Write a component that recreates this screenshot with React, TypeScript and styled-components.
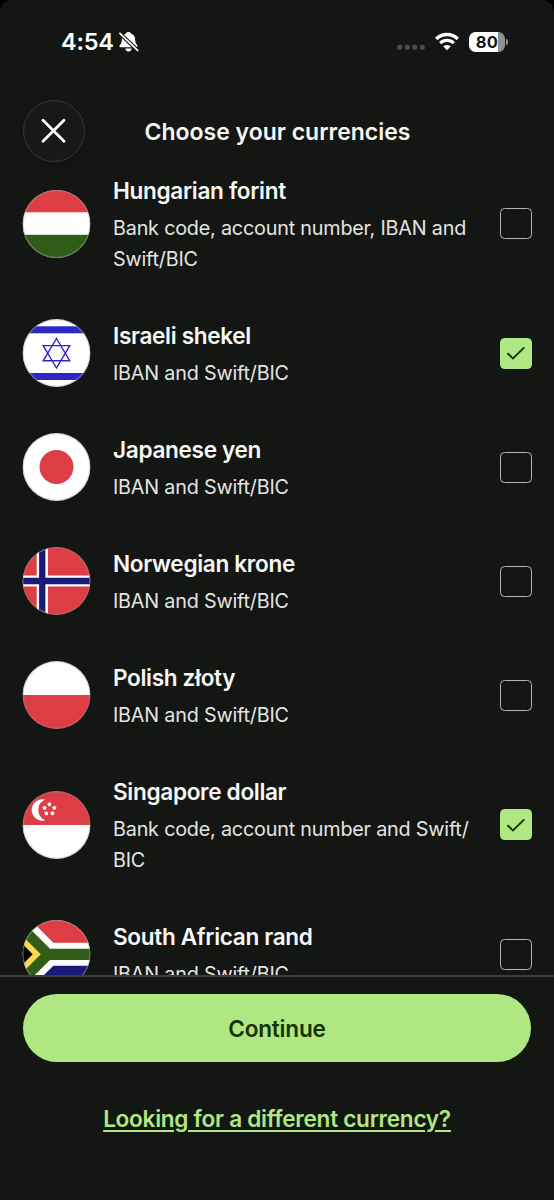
import React, { useState } from "react";
import styled, { createGlobalStyle } from "styled-components";

const GlobalStyle = createGlobalStyle`
  * { box-sizing: border-box; }
  body { margin: 0; background: #000; }
  button { font: inherit; border: 0; padding: 0; cursor: pointer; }
`;

const Screen = styled.main`
  width: 554px;
  height: 1200px;
  display: flex;
  flex-direction: column;
  overflow: hidden;
  border-radius: 12px 12px 0 0;
  background: #141613;
  color: #f6f7f5;
  font-family: Inter, "Liberation Sans", sans-serif;
`;

const StatusBar = styled.div`
  height: 83px;
  flex: none;
  display: flex;
  align-items: center;
  justify-content: space-between;
  padding: 0 46px 0 61px;
`;

const StatusGroup = styled.div<{ $gap: number }>`
  display: flex;
  align-items: center;
  gap: ${(p) => p.$gap}px;
`;

const Time = styled.span`
  width: 53px;
  font-size: 23.5px;
  font-weight: 600;
  line-height: 30px;
  letter-spacing: -0.2px;
  color: #fff;
`;

const Battery = styled.div`
  display: flex;
  align-items: center;
  gap: 1px;
`;

const BatteryBody = styled.div`
  width: 36px;
  height: 20px;
  border-radius: 6.5px;
  background: linear-gradient(90deg, #fff 29px, #8f908e 29px);
  color: #141613;
  font-size: 16.5px;
  font-weight: 700;
  line-height: 20px;
  text-align: center;
  letter-spacing: 0.2px;
`;

const BatteryTip = styled.div`
  width: 2px;
  height: 6px;
  border-radius: 0 2px 2px 0;
  background: #8f908e;
`;

const Header = styled.header`
  height: 87px;
  flex: none;
  display: grid;
  grid-template-columns: 62px 1fr 62px;
  align-items: start;
  padding: 17px 23px 0;
`;

const CloseButton = styled.button`
  width: 62px;
  height: 62px;
  display: grid;
  place-items: center;
  border: 1.3px solid #353735;
  border-radius: 50%;
  background: #181917;
  box-shadow: 0 3px 12px rgba(0, 0, 0, 0.2);
`;

const Title = styled.h1`
  margin: 0;
  padding-left: 1px;
  font-size: 23px;
  font-weight: 600;
  line-height: 65px;
  text-align: center;
  white-space: nowrap;
`;

const Viewport = styled.section`
  height: 805px;
  flex: none;
  overflow: hidden;
`;

const List = styled.ul`
  list-style: none;
  margin: -19px 0 0;
  padding: 0;
`;

const Row = styled.li`
  display: flex;
  align-items: center;
  padding: 22px 22px 21px;
`;

const FlagBadge = styled.svg`
  width: 69px;
  height: 68px;
  flex: none;
  display: block;
  margin-top: -1px;
`;

const RowText = styled.div`
  flex: 1;
  min-width: 0;
  display: flex;
  flex-direction: column;
  gap: 4px;
  padding: 0 20px 0 22px;
`;

const Name = styled.span`
  font-size: 22.6px;
  font-weight: 600;
  line-height: 36px;
  letter-spacing: -0.33px;
  color: #f7f8f6;
`;

const Details = styled.span`
  font-size: 19.75px;
  font-weight: 400;
  line-height: 31px;
  letter-spacing: -0.19px;
  white-space: pre;
  color: #e4e5e3;
`;

const Checkbox = styled.button<{ $checked: boolean }>`
  width: 32px;
  height: 31px;
  flex: none;
  display: grid;
  place-items: center;
  margin-top: -1px;
  border-radius: 4.5px;
  border: 1.4px solid ${(p) => (p.$checked ? "#afe782" : "#b5b6b4")};
  background: ${(p) => (p.$checked ? "#afe782" : "transparent")};
`;

const Footer = styled.footer`
  flex: 1;
  display: flex;
  flex-direction: column;
  align-items: center;
  border-top: 2px solid #3a3c3a;
  padding: 17px 23px 0;
`;

const ContinueButton = styled.button`
  width: 100%;
  height: 68px;
  border-radius: 34px;
  background: #afe782;
  color: #163300;
  font-size: 22.6px;
  font-weight: 600;
  letter-spacing: -0.2px;
`;

const HelpLink = styled.a`
  margin-top: 40px;
  font-size: 22.6px;
  font-weight: 600;
  line-height: 34px;
  letter-spacing: -0.28px;
  color: #afe782;
  white-space: nowrap;
  text-decoration: underline;
  text-decoration-thickness: 2px;
  text-underline-offset: 3px;
`;

const RED = "#dd3d44";
const GREEN = "#2f5c16";
const NAVY = "#1c1a78";

const starPoints = (cx: number, cy: number, r: number) =>
  Array.from({ length: 10 }, (_, i) => {
    const a = (Math.PI / 5) * i - Math.PI / 2;
    const d = i % 2 ? r * 0.7 : r;
    return `${cx + d * Math.cos(a)},${cy + d * Math.sin(a)}`;
  }).join(" ");

const flags: Record<string, React.ReactNode> = {
  hu: (
    <>
      <rect width="68" height="68" fill="#fff" />
      <rect width="68" height="22.3" fill={RED} />
      <rect y="44.8" width="68" height="24" fill={GREEN} />
    </>
  ),
  il: (
    <>
      <rect width="68" height="68" fill="#fff" />
      <rect y="7.3" width="68" height="7" fill="#2e27c4" />
      <rect y="54" width="68" height="7" fill="#2e27c4" />
      <path d="M34 19.5 47.3 41.8H20.7ZM34 49 20.7 26.6H47.3Z" fill="none" stroke="#2e27c4" strokeWidth="1.4" />
    </>
  ),
  jp: (
    <>
      <rect width="68" height="68" fill="#fff" />
      <circle cx="34" cy="34" r="17" fill={RED} />
    </>
  ),
  no: (
    <>
      <rect width="68" height="68" fill={RED} />
      <path d="M14.2 0h11.2v68H14.2zM0 28.4h68v11.2H0z" fill="#fff" />
      <path d="M16.6 0h6.3v68h-6.3zM0 30.8h68v6.4H0z" fill={NAVY} />
    </>
  ),
  pl: (
    <>
      <rect width="68" height="34" fill="#fff" />
      <rect y="34" width="68" height="34" fill={RED} />
    </>
  ),
  sg: (
    <>
      <rect width="68" height="34" fill={RED} />
      <rect y="34" width="68" height="34" fill="#fff" />
      <path d="M22.9 8.6A10.8 10.8 0 1 0 22.9 29.4A11.2 11.2 0 0 1 22.9 8.6Z" fill="#fff" />
      {[[26.9, 13.4], [22.1, 16.9], [31.8, 16.9], [23.8, 22.4], [29.9, 22.4]].map(([x, y]) => (
        <polygon key={`${x}-${y}`} points={starPoints(x, y, 2.3)} fill="#fff" />
      ))}
    </>
  ),
  za: (
    <>
      <rect width="68" height="68" fill="#fff" />
      <path d="M8.1 0H68V22.7H30.8Z" fill={RED} />
      <path d="M8.1 68.4H68V45.7H30.8Z" fill={NAVY} />
      <path d="M0 1.2 27.5 28.7H68V39.9H27.5L0 67.4Z" fill={GREEN} />
      <path d="M0 15.9 18.3 34.2 0 52.5Z" fill="#fbd84c" />
      <path d="M0 24 10.2 34.2 0 44.4Z" fill="#000" />
    </>
  ),
};

const Flag = ({ code }: { code: string }) => (
  <FlagBadge viewBox="-0.5 0 69 68">
    <clipPath id={`flag-${code}`}>
      <circle cx="34" cy="34" r="33.9" />
    </clipPath>
    <g clipPath={`url(#flag-${code})`}>{flags[code]}</g>
    <circle cx="34" cy="34" r="33.3" fill="none" stroke="#9b9d9a" strokeOpacity="0.4" strokeWidth="1.2" />
  </FlagBadge>
);

const currencies = [
  { code: "hu", name: "Hungarian forint", details: "Bank code, account number, IBAN and\nSwift/BIC" },
  { code: "il", name: "Israeli shekel", details: "IBAN and Swift/BIC" },
  { code: "jp", name: "Japanese yen", details: "IBAN and Swift/BIC" },
  { code: "no", name: "Norwegian krone", details: "IBAN and Swift/BIC" },
  { code: "pl", name: "Polish złoty", details: "IBAN and Swift/BIC" },
  { code: "sg", name: "Singapore dollar", details: "Bank code, account number and Swift/\nBIC" },
  { code: "za", name: "South African rand", details: "IBAN and Swift/BIC" },
];

const BellOff = () => (
  <svg width="20" height="22" viewBox="0 0 20 22">
    <path
      d="M9.500 1c1.400 0 2.200.6 2.600 1.500 2.600 1 3.900 3 4 5.700.1 3 .7 4.300 2 5.700.9 1 .5 2.300-.9 2.300H1.800c-1.400 0-1.800-1.300-.9-2.300 1.300-1.400 1.900-2.700 2-5.700.1-2.700 1.400-4.700 4-5.700C7.300 1.600 8.100 1 9.500 1ZM6.300 17.600h6.400c-.3 1.900-1.500 3-3.200 3s-2.900-1.100-3.200-3Z"
      fill="#fff"
    />
    <path d="M0 1.600 19.500 20.300" stroke="#141613" strokeWidth="4" />
    <path d="M.9 2.400 18.600 19.400" stroke="#fff" strokeWidth="1.700" strokeLinecap="round" />
  </svg>
);

const SignalDots = () => (
  <svg width="28" height="19" viewBox="0 0 28 19" fill="#4b4d4a">
    {[0.2, 7.8, 15.3, 22.9].map((x) => (
      <rect key={x} x={x} y="12.800" width="4.900" height="4.900" rx="1.600" />
    ))}
  </svg>
);

const Wifi = () => (
  <svg width="24" height="19" viewBox="0 0 24 19">
    <g fill="none" stroke="#fff" strokeWidth="3.300">
      <path d="M1.200 7C7.200 1 16.800 1 22.800 7" />
      <path d="M5.200 11.100c3.800-3.700 9.800-3.700 13.600 0" />
    </g>
    <path d="M12 18.300 8.300 14.600c2.100-2 5.300-2 7.400 0Z" fill="#fff" />
  </svg>
);

export default function App() {
  const [selected, setSelected] = useState<string[]>(["il", "sg"]);
  const toggle = (code: string) =>
    setSelected((s) => (s.includes(code) ? s.filter((c) => c !== code) : [...s, code]));

  return (
    <>
      <GlobalStyle />
      <Screen>
        <StatusBar>
          <StatusGroup $gap={5}>
            <Time>4:54</Time>
            <BellOff />
          </StatusGroup>
          <StatusGroup $gap={10}>
            <SignalDots />
            <Wifi />
            <Battery>
              <BatteryBody>80</BatteryBody>
              <BatteryTip />
            </Battery>
          </StatusGroup>
        </StatusBar>
        <Header>
          <CloseButton aria-label="Close">
            <svg width="26" height="26" viewBox="0 0 26 26">
              <path d="M2 2.300 23 23.300M23 2.300 2 23.300" stroke="#fff" strokeWidth="2.800" strokeLinecap="round" />
            </svg>
          </CloseButton>
          <Title>Choose your currencies</Title>
        </Header>
        <Viewport>
          <List>
            {currencies.map((c) => {
              const checked = selected.includes(c.code);
              return (
                <Row key={c.code}>
                  <Flag code={c.code} />
                  <RowText>
                    <Name>{c.name}</Name>
                    <Details>{c.details}</Details>
                  </RowText>
                  <Checkbox
                    $checked={checked}
                    role="checkbox"
                    aria-checked={checked}
                    aria-label={c.name}
                    onClick={() => toggle(c.code)}
                  >
                    {checked && (
                      <svg width="20" height="14" viewBox="0 0 20 14">
                        <path d="M1.500 7.300 7 12.500 18.300 1.300" fill="none" stroke="#163300" strokeWidth="1.900" />
                      </svg>
                    )}
                  </Checkbox>
                </Row>
              );
            })}
          </List>
        </Viewport>
        <Footer>
          <ContinueButton>Continue</ContinueButton>
          <HelpLink>Looking for a different currency?</HelpLink>
        </Footer>
      </Screen>
    </>
  );
}
